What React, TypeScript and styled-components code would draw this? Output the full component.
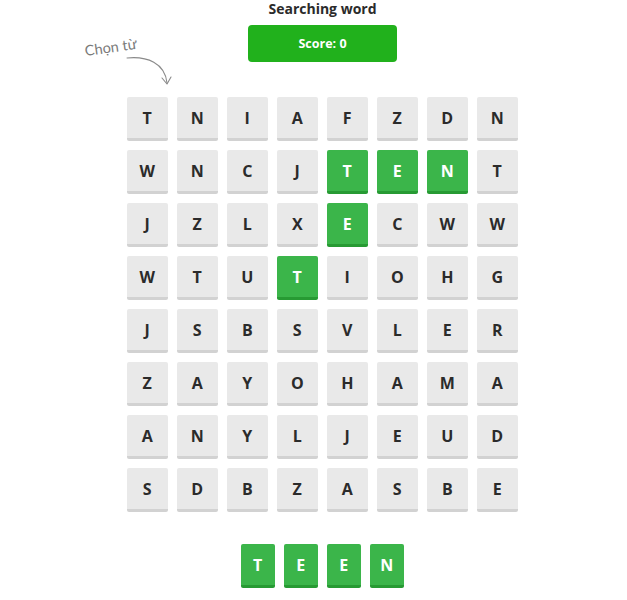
import React from "react";
import styled, { createGlobalStyle } from "styled-components";

const Global = createGlobalStyle`
  html, body { margin: 0; padding: 0; background: #ffffff; }
  body { font-family: "Open Sans", "Liberation Sans", sans-serif; }
`;

const Page = styled.div`
  display: flex;
  flex-direction: column;
  align-items: center;
  padding-left: 18px;
  width: 627px;
  box-sizing: border-box;
`;

const Title = styled.h1`
  margin: 0;
  font-size: 14px;
  line-height: 18px;
  font-weight: 700;
  color: #2b2b2b;
`;

const ScoreButton = styled.div`
  margin-top: 7px;
  width: 149px;
  height: 37px;
  border-radius: 4px;
  background: #21b11c;
  color: #ffffff;
  font-size: 12.5px;
  font-weight: 700;
  display: flex;
  align-items: center;
  justify-content: center;
`;

const BoardArea = styled.div`
  position: relative;
  margin-top: 35px;
`;

const Grid = styled.div`
  display: grid;
  grid-template-columns: repeat(8, 41px);
  gap: 9px;
`;

const Tile = styled.div<{ $on?: boolean; $w?: number }>`
  width: ${(p) => p.$w ?? 41}px;
  height: 41px;
  border-radius: 2px;
  background: ${(p) => (p.$on ? "#3bb54a" : "#e9e9e9")};
  border-bottom: 3px solid ${(p) => (p.$on ? "#279a33" : "#d2d2d2")};
  color: ${(p) => (p.$on ? "#ffffff" : "#2b2b2b")};
  display: flex;
  align-items: center;
  justify-content: center;
  font-size: 16px;
  font-weight: 700;
  letter-spacing: 0.5px;
`;

const Hint = styled.div`
  position: absolute;
  left: -44px;
  top: -56px;
  width: 100px;
  height: 60px;
  pointer-events: none;
`;

const HintText = styled.span`
  position: absolute;
  left: 3px;
  top: 1px;
  font-family: "Lato", "Open Sans", sans-serif;
  font-size: 14.5px;
  font-weight: 400;
  color: #7a7a7a;
  transform: rotate(-8deg);
  transform-origin: left bottom;
  white-space: nowrap;
`;

const Answer = styled.div`
  margin-top: 32px;
  display: flex;
  gap: 9px;
`;

const rows = [
  "TNIAFZDN",
  "WNCJTENT",
  "JZLXECWW",
  "WTUTIOHG",
  "JSBSVLER",
  "ZAYOHAMA",
  "ANYLJEUD",
  "SDBZASBE",
];

const green = new Set(["1-4", "1-5", "1-6", "2-4", "3-3"]);

export default function App() {
  return (
    <>
      <Global />
      <Page>
        <Title>Searching word</Title>
        <ScoreButton>Score: 0</ScoreButton>
        <BoardArea>
          <Hint>
            <HintText>Chọn từ</HintText>
            <svg width="100" height="60" viewBox="0 0 100 60" style={{ position: "absolute", left: 0, top: 0 }}>
              <path d="M44 17 C 64 15, 82 22, 84 42" fill="none" stroke="#8a8a8a" strokeWidth="1.1" strokeLinecap="round" />
              <path d="M79 37 L84 43 L88 36" fill="none" stroke="#8a8a8a" strokeWidth="1.1" strokeLinecap="round" strokeLinejoin="round" />
            </svg>
          </Hint>
          <Grid>
            {rows.map((r, ri) =>
              r.split("").map((ch, ci) => (
                <Tile key={`${ri}-${ci}`} $on={green.has(`${ri}-${ci}`)}>
                  {ch}
                </Tile>
              ))
            )}
          </Grid>
        </BoardArea>
        <Answer>
          {"TEEN".split("").map((ch, i) => (
            <Tile key={i} $on $w={34}>
              {ch}
            </Tile>
          ))}
        </Answer>
      </Page>
    </>
  );
}
